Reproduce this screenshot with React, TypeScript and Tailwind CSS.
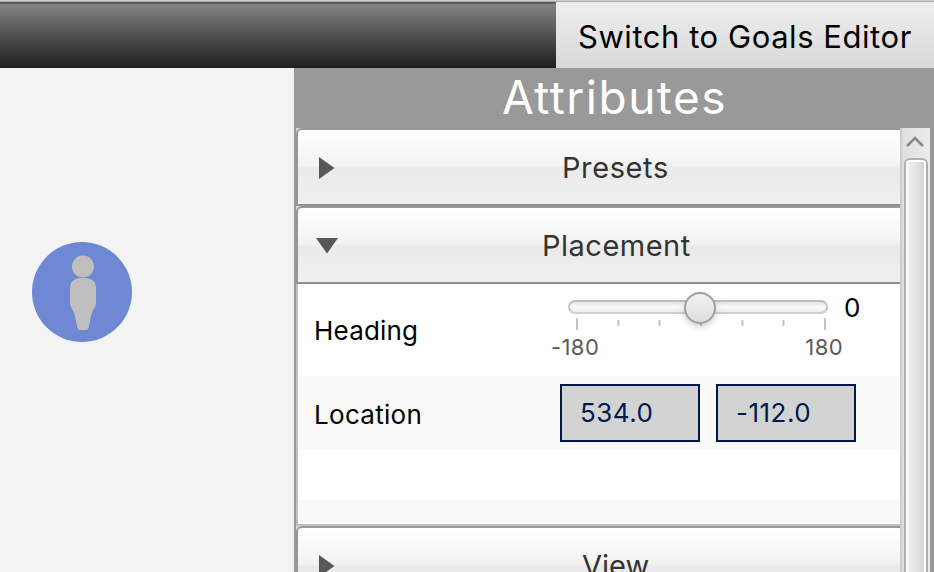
import type { ReactNode } from "react";

function SectionHeader({ title, open, className }: { title: string; open: boolean; className: string }) {
  return (
    <div className="h-[78px] shrink-0 bg-[#d8d8d8]">
      <div className="flex h-[78px] w-full items-center rounded-tl-[6px] border-y-2 border-l-2 border-b-[#909090] border-l-[#969696] border-t-[#999999] bg-[linear-gradient(to_bottom,#ffffff_0%,#fdfdfd_12%,#f2f2f2_49%,#eaeaea_51%,#f0f0f0_100%)]">
        <div className="flex w-[60px] shrink-0 pl-[18px] pt-[2px]">
          <svg width="24" height="24" viewBox="0 0 24 24" fill="#575757">
            {open ? <path d="M0 4h22L11 19.500z" /> : <path d="M3 1v22l15.500-11z" />}
          </svg>
        </div>
        <div className={"whitespace-nowrap pt-[1px] text-[29px] leading-[36px] text-[#333] " + className}>{title}</div>
      </div>
    </div>
  );
}

function Row({ className, children }: { className: string; children?: ReactNode }) {
  return <div className={"flex shrink-0 " + className}>{children}</div>;
}

function Slider() {
  return (
    <div className="relative h-[92px] w-[260px]">
      <div className="mt-[16px] h-[14px] w-[260px] rounded-full border-2 border-t-[#bdbdbd] border-x-[#c6c6c6] border-b-[#cfcfcf] bg-gradient-to-b from-[#e2e2e2] via-[#fafafa] to-[#eeeeee]" />
      <svg className="block" width="260" height="18" viewBox="0 0 260 18">
        <g fill="#c4c4c4">
          <rect x="8" y="4" width="2" height="12" />
          <rect x="49.500" y="6" width="2" height="6" />
          <rect x="90.500" y="6" width="2" height="6" />
          <rect x="132" y="6" width="2" height="6" />
          <rect x="173.500" y="6" width="2" height="6" />
          <rect x="214.500" y="6" width="2" height="6" />
          <rect x="256" y="4" width="2" height="12" />
        </g>
      </svg>
      <div className="-ml-[17px] -mr-[15px] flex justify-between text-[22px] leading-[30px] tracking-[0.4px] text-[#5b5b5b]">
        <span>-180</span>
        <span>180</span>
      </div>
      <div className="absolute left-[116px] top-[8px] h-[32px] w-[32px] rounded-full border-2 border-[#a0a0a0] bg-gradient-to-b from-[#f2f2f2] to-[#dddddd] shadow-[0_3px_6px_rgba(0,0,0,0.18)]" />
    </div>
  );
}

function Field({ value }: { value: string }) {
  return (
    <div className="h-[58px] w-[140px] border-2 border-[#001848] bg-[#d3d3d3] pl-[18px] text-[26px] leading-[54px] tracking-[0.5px] text-[#001a50]">
      {value}
    </div>
  );
}

export default function App() {
  return (
    <div className="flex h-[572px] w-[934px] flex-col overflow-hidden bg-[#f3f3f3] font-[Inter,'Liberation_Sans',sans-serif]">
      <div className="h-[2px] shrink-0 border-b border-[#aaaaaa] bg-[#d0d0d0]" />
      <div className="flex h-[66px] shrink-0">
        <div className="w-[556px] border-t-2 border-[#5c5c5c] bg-gradient-to-b from-[#848484] to-[#202020]" />
        <div className="w-[378px] whitespace-nowrap bg-gradient-to-b from-[#eeeeee] to-[#d9d9d9] pl-[22px] text-[31px] leading-[69px] tracking-[0.55px] text-black">
          Switch to Goals Editor
        </div>
      </div>
      <div className="flex min-h-0 flex-1">
        <div className="w-[294px] pl-[32px] pt-[174px]">
          <svg width="100" height="100" viewBox="0 0 100 100">
            <circle cx="50" cy="50" r="50" fill="#6f88d3" />
            <g fill="#c0bfc0">
              <circle cx="51" cy="24.500" r="11" />
              <path d="M48 36h6q10 1 10 9v16q0 3-2 6q-2 2-2.500 5l-3 14q-.5 2-2.500 2h-6q-2 0-2.500-2l-3-14q-.5-3-2.500-5q-2-3-2-6V45q0-8 10-9z" />
            </g>
          </svg>
        </div>
        <div className="flex w-[640px] flex-col bg-[#999999]">
          <h1 className="h-[60px] shrink-0 whitespace-nowrap pl-[208px] text-[46px] leading-[58px] tracking-[1.5px] text-white">Attributes</h1>
          <div className="flex min-h-0 flex-1 pl-[2px]">
            <div className="flex w-[604px] flex-col overflow-hidden">
              <SectionHeader title="Presets" open={false} className="pl-[204px] tracking-[0.6px]" />
              <SectionHeader title="Placement" open className="pl-[184px] tracking-[0.5px]" />
              <div className="flex h-[242px] shrink-0 flex-col border-b-2 border-l-2 border-[#c0c0c0] bg-white">
                <Row className="h-[92px]">
                  <div className="w-[270px] pl-[16px] text-[26px] leading-[94px] tracking-[0.2px]">Heading</div>
                  <Slider />
                  <div className="pl-[16px] pt-[8px] text-[26px] leading-[32px]">0</div>
                </Row>
                <Row className="h-[74px] gap-[16px] bg-[#f9f9f9] pt-[8px]">
                  <div className="w-[246px] pl-[16px] text-[26px] leading-[62px] tracking-[0.3px]">Location</div>
                  <Field value="534.0" />
                  <Field value="-112.0" />
                </Row>
                <Row className="h-[50px]" />
                <Row className="h-[24px] bg-[#f9f9f9]" />
              </div>
              <SectionHeader title="View" open={false} className="pl-[224px]" />
            </div>
            <div className="flex w-[30px] flex-col border-l-2 border-[#cccccc] bg-gradient-to-r from-[#dfdfdf] to-[#ececec]">
              <svg className="block shrink-0" width="28" height="30" viewBox="0 0 28 30" fill="none" stroke="#888" strokeWidth="2.500">
                <path d="M5 18l8-8 8 8" />
              </svg>
              <div className="ml-[2px] h-[430px] w-[24px] shrink-0 rounded-t-[6px] border-2 border-[#b0b0b0] bg-white p-[2px]">
                <div className="h-full bg-gradient-to-r from-[#f0f0f0] to-[#d6d6d6]" />
              </div>
            </div>
          </div>
        </div>
      </div>
    </div>
  );
}
